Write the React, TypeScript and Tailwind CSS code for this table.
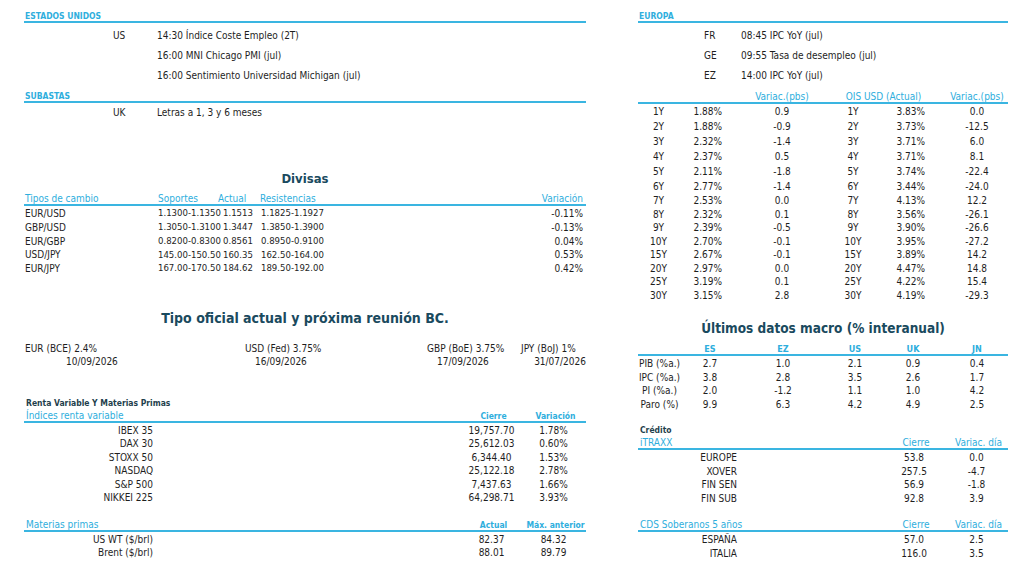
import type { ReactNode } from "react";

const yields: string[][] = [
  ["1Y", "1.88%", "0.9", "1Y", "3.83%", "0.0"],
  ["2Y", "1.88%", "-0.9", "2Y", "3.73%", "-12.5"],
  ["3Y", "2.32%", "-1.4", "3Y", "3.71%", "6.0"],
  ["4Y", "2.37%", "0.5", "4Y", "3.71%", "8.1"],
  ["5Y", "2.11%", "-1.8", "5Y", "3.74%", "-22.4"],
  ["6Y", "2.77%", "-1.4", "6Y", "3.44%", "-24.0"],
  ["7Y", "2.53%", "0.0", "7Y", "4.13%", "12.2"],
  ["8Y", "2.32%", "0.1", "8Y", "3.56%", "-26.1"],
  ["9Y", "2.39%", "-0.5", "9Y", "3.90%", "-26.6"],
  ["10Y", "2.70%", "-0.1", "10Y", "3.95%", "-27.2"],
  ["15Y", "2.67%", "-0.1", "15Y", "3.89%", "14.2"],
  ["20Y", "2.97%", "0.0", "20Y", "4.47%", "14.8"],
  ["25Y", "3.19%", "0.1", "25Y", "4.22%", "15.4"],
  ["30Y", "3.15%", "2.8", "30Y", "4.19%", "-29.3"],
];

const fx: string[][] = [
  ["EUR/USD", "1.1300-1.1350", "1.1513", "1.1825-1.1927", "-0.11%"],
  ["GBP/USD", "1.3050-1.3100", "1.3447", "1.3850-1.3900", "-0.13%"],
  ["EUR/GBP", "0.8200-0.8300", "0.8561", "0.8950-0.9100", "0.04%"],
  ["USD/JPY", "145.00-150.50", "160.35", "162.50-164.00", "0.53%"],
  ["EUR/JPY", "167.00-170.50", "184.62", "189.50-192.00", "0.42%"],
];

const indices: string[][] = [
  ["IBEX 35", "19,757.70", "1.78%"],
  ["DAX 30", "25,612.03", "0.60%"],
  ["STOXX 50", "6,344.40", "1.53%"],
  ["NASDAQ", "25,122.18", "2.78%"],
  ["S&P 500", "7,437.63", "1.66%"],
  ["NIKKEI 225", "64,298.71", "3.93%"],
];

const commodities: string[][] = [
  ["US WT ($/brl)", "82.37", "84.32"],
  ["Brent ($/brl)", "88.01", "89.79"],
];

const macro: string[][] = [
  ["PIB (%a.)", "2.7", "1.0", "2.1", "0.9", "0.4"],
  ["IPC (%a.)", "3.8", "2.8", "3.5", "2.6", "1.7"],
  ["PI (%a.)", "2.0", "-1.2", "1.1", "1.0", "4.2"],
  ["Paro (%)", "9.9", "6.3", "4.2", "4.9", "2.5"],
];

const itraxx: string[][] = [
  ["EUROPE", "53.8", "0.0"],
  ["XOVER", "257.5", "-4.7"],
  ["FIN SEN", "56.9", "-1.8"],
  ["FIN SUB", "92.8", "3.9"],
];

const cds: string[][] = [
  ["ESPAÑA", "57.0", "2.5"],
  ["ITALIA", "116.0", "3.5"],
];

function SectionHead({ children, className }: { children: ReactNode; className: string }) {
  return (
    <div className={`flex items-end border-b-2 border-[#3ab5e1] pl-[1px] text-[8.5px] font-bold leading-[10px] text-[#2eaedd] ${className}`}>
      {children}
    </div>
  );
}

function Title({ children, className }: { children: ReactNode; className: string }) {
  return (
    <div className={`flex items-center justify-center font-bold text-[#1a4a5e] ${className}`}>
      {children}
    </div>
  );
}

function yieldRowHeight(i: number) {
  if (i < 5) return "h-[15px]";
  if (i === 5) return "h-[14px]";
  return "h-[13.5px]";
}

export default function App() {
  return (
    <div className="flex h-[568px] w-[1024px] overflow-hidden bg-white font-['DejaVu_Sans_Condensed','DejaVu_Sans',sans-serif] text-[10px] text-[#1e1e1e] [font-stretch:condensed]">
      {/* left column */}
      <div className="ml-[24px] flex w-[562px] flex-col">
        <SectionHead className="h-[23px]">ESTADOS UNIDOS</SectionHead>
        <div className="mt-[2px]">
          {[
            "14:30 Índice Coste Empleo (2T)",
            "16:00 MNI Chicago PMI (jul)",
            "16:00 Sentimiento Universidad Michigan (jul)",
          ].map((t, i) => (
            <div key={t} className="grid h-[20px] grid-cols-[89px_44px_1fr] items-center">
              <span />
              <span>{i === 0 ? "US" : ""}</span>
              <span>{t}</span>
            </div>
          ))}
        </div>
        <SectionHead className="h-[18px]">SUBASTAS</SectionHead>
        <div className="grid h-[18px] grid-cols-[89px_44px_1fr] items-center">
          <span />
          <span>UK</span>
          <span>Letras a 1, 3 y 6 meses</span>
        </div>

        <Title className="mt-[48px] h-[20px] text-[13px]">Divisas</Title>
        <div className="grid h-[17px] grid-cols-[133px_60px_42px_1fr_auto] items-end border-b-2 border-[#3ab5e1] pl-[1px] pr-[3px] leading-[10px] text-[#2eaedd]">
          <span>Tipos de cambio</span>
          <span>Soportes</span>
          <span>Actual</span>
          <span>Resistencias</span>
          <span>Variación</span>
        </div>
        {fx.map((r) => (
          <div key={r[0]} className="grid h-[13.75px] grid-cols-[133px_65px_38px_1fr_auto] items-center pl-[1px] pr-[3px] text-[9.5px]">
            <span className="text-[10px]">{r[0]}</span>
            <span className="whitespace-nowrap">{r[1]}</span>
            <span>{r[2]}</span>
            <span className="whitespace-nowrap">{r[3]}</span>
            <span className="text-[10px]">{r[4]}</span>
          </div>
        ))}

        <Title className="mt-[33px] h-[22px] text-[14px]">Tipo oficial actual y próxima reunión BC.</Title>
        <div className="mt-[12px] grid grid-cols-[220px_182px_94px_65px] pl-[1px]">
          {[
            ["EUR (BCE) 2.4%", "10/09/2026", "pl-[41px]"],
            ["USD (Fed) 3.75%", "16/09/2026", "pl-[10px]"],
            ["GBP (BoE) 3.75%", "17/09/2026", "pl-[10px]"],
            ["JPY (BoJ) 1%", "31/07/2026", "text-right"],
          ].map(([label, date, cls]) => (
            <div key={label} className="flex flex-col">
              <span className="flex h-[13px] items-center whitespace-nowrap">{label}</span>
              <span className={`h-[13px] whitespace-nowrap leading-[13px] ${cls}`}>{date}</span>
            </div>
          ))}
        </div>

        <div className="mt-[29px] flex h-[13px] items-center pl-[2px] text-[8.5px] font-bold text-[#1f3f4d]">
          Renta Variable Y Materias Primas
        </div>
        <div className="grid h-[13px] grid-cols-[440px_55px_69px] items-end border-b-2 border-[#3ab5e1] pl-[2px] leading-[10px] text-[#2eaedd]">
          <span>Índices renta variable</span>
          <span className="flex justify-center text-[8.5px] font-bold">Cierre</span>
          <span className="flex justify-center text-[8.5px] font-bold">Variación</span>
        </div>
        {indices.map((r) => (
          <div key={r[0]} className="grid h-[13.5px] grid-cols-[129px_311px_55px_69px] items-center">
            <span className="text-right">{r[0]}</span>
            <span />
            <span className="flex justify-center">{r[1]}</span>
            <span className="flex justify-center">{r[2]}</span>
          </div>
        ))}
        <div className="mt-[15px] grid h-[13px] grid-cols-[440px_55px_69px] items-end border-b-2 border-[#3ab5e1] pl-[2px] leading-[10px] text-[#2eaedd]">
          <span>Materias primas</span>
          <span className="flex justify-center text-[8.5px] font-bold">Actual</span>
          <span className="flex justify-center whitespace-nowrap text-[8.5px] font-bold">Máx. anterior</span>
        </div>
        {commodities.map((r) => (
          <div key={r[0]} className="grid h-[13.5px] grid-cols-[129px_311px_55px_69px] items-center">
            <span className="whitespace-nowrap text-right">{r[0]}</span>
            <span />
            <span className="flex justify-center">{r[1]}</span>
            <span className="flex justify-center">{r[2]}</span>
          </div>
        ))}
      </div>

      {/* right column */}
      <div className="ml-[52px] flex w-[370px] flex-col">
        <SectionHead className="h-[23px]">EUROPA</SectionHead>
        <div className="mt-[2px]">
          {[
            ["FR", "08:45 IPC YoY (jul)"],
            ["GE", "09:55 Tasa de desempleo (jul)"],
            ["EZ", "14:00 IPC YoY (jul)"],
          ].map(([c, t]) => (
            <div key={c} className="grid h-[20px] grid-cols-[66px_37px_1fr] items-center">
              <span />
              <span>{c}</span>
              <span>{t}</span>
            </div>
          ))}
        </div>

        <div className="grid h-[19px] grid-cols-[41px_43px_120px_83px_83px] items-end border-b-2 border-[#3ab5e1] leading-[10px] text-[#2eaedd]">
          <span />
          <span />
          <span className="flex justify-center">Variac.(pbs)</span>
          <span className="flex justify-center whitespace-nowrap">OIS USD (Actual)</span>
          <span className="flex justify-center pl-[21px]">Variac.(pbs)</span>
        </div>
        {yields.map((r, i) => (
          <div key={r[0]} className={`grid grid-cols-[41px_43px_120px_22px_61px_83px] items-center ${yieldRowHeight(i)}`}>
            <span className="flex justify-center">{r[0]}</span>
            <span className="text-right">{r[1]}</span>
            <span className="flex justify-center">{r[2]}</span>
            <span className="flex justify-center">{r[3]}</span>
            <span className="text-right">{r[4]}</span>
            <span className="flex justify-center pl-[21px]">{r[5]}</span>
          </div>
        ))}

        <Title className="mt-[17px] h-[20px] text-[13.5px]">Últimos datos macro (% interanual)</Title>
        <div className="grid h-[18px] grid-cols-[43px_58px_88px_56px_60px_65px] items-end border-b-2 border-[#3ab5e1] text-[9px] font-bold leading-[10px] text-[#2eaedd]">
          <span />
          {["ES", "EZ", "US", "UK"].map((c) => (
            <span key={c} className="flex justify-center">{c}</span>
          ))}
          <span className="flex justify-center pl-[3px]">JN</span>
        </div>
        {macro.map((r) => (
          <div key={r[0]} className="grid h-[13.5px] grid-cols-[43px_58px_88px_56px_60px_65px] items-center">
            <span className="flex justify-center whitespace-nowrap">{r[0]}</span>
            <span className="flex justify-center">{r[1]}</span>
            <span className="flex justify-center">{r[2]}</span>
            <span className="flex justify-center">{r[3]}</span>
            <span className="flex justify-center">{r[4]}</span>
            <span className="flex justify-center pl-[3px]">{r[5]}</span>
          </div>
        ))}

        <div className="mt-[14px] flex h-[13px] items-center pl-[2px] text-[8.5px] font-bold text-[#1f3f4d]">Crédito</div>
        <div className="grid h-[13px] grid-cols-[245px_62px_63px] items-end border-b-2 border-[#3ab5e1] pl-[2px] leading-[10px] text-[#2eaedd]">
          <span>iTRAXX</span>
          <span className="flex justify-center">Cierre</span>
          <span className="flex justify-center whitespace-nowrap">Variac. día</span>
        </div>
        {itraxx.map((r) => (
          <div key={r[0]} className="grid h-[13.5px] grid-cols-[99px_146px_62px_63px] items-center">
            <span className="text-right">{r[0]}</span>
            <span />
            <span className="flex justify-center">{r[1]}</span>
            <span className="flex justify-center">{r[2]}</span>
          </div>
        ))}
        <div className="mt-[15px] grid h-[13px] grid-cols-[245px_62px_63px] items-end border-b-2 border-[#3ab5e1] pl-[2px] leading-[10px] text-[#2eaedd]">
          <span>CDS Soberanos 5 años</span>
          <span className="flex justify-center">Cierre</span>
          <span className="flex justify-center whitespace-nowrap">Variac. día</span>
        </div>
        {cds.map((r) => (
          <div key={r[0]} className="grid h-[13.5px] grid-cols-[99px_146px_62px_63px] items-center">
            <span className="text-right">{r[0]}</span>
            <span />
            <span className="flex justify-center">{r[1]}</span>
            <span className="flex justify-center">{r[2]}</span>
          </div>
        ))}
      </div>
    </div>
  );
}
